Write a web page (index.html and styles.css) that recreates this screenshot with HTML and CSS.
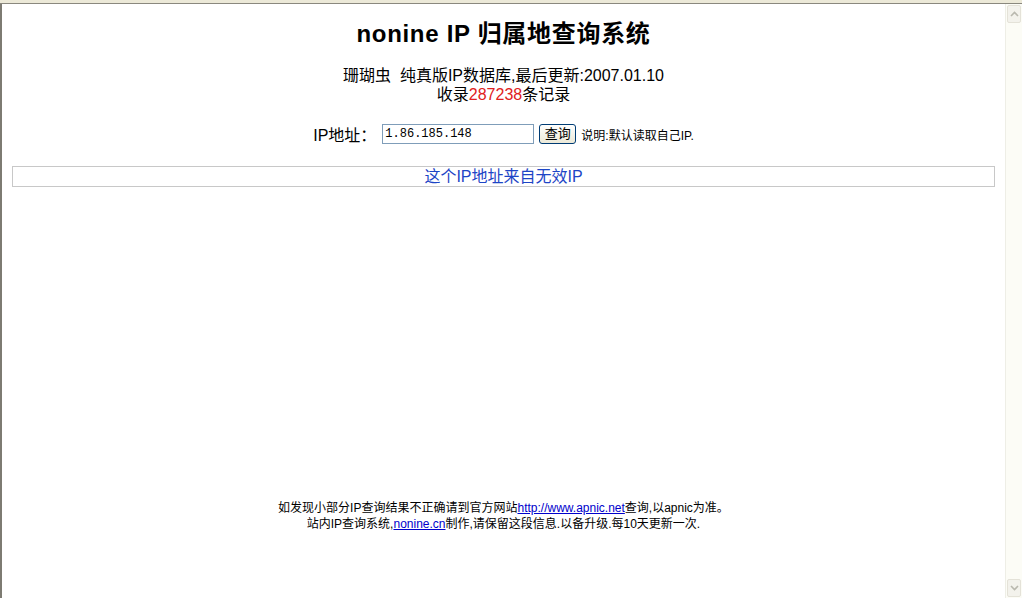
FILE: index.html
```html
<!DOCTYPE html>
<html lang="zh-CN">
<head>
    <meta charset="UTF-8">
    <title>nonine IP 归属地查询系统</title>
    <link rel="stylesheet" href="styles.css">
</head>
<body>

<div class="chrome-top"></div>

<div class="viewport">
    <div class="content">
        <h1>nonine IP 归属地查询系统</h1>

        <p class="info">
            珊瑚虫&nbsp; 纯真版IP数据库,最后更新:2007.01.10<br>
            收录<span class="count">287238</span>条记录
        </p>

        <form class="query">
            <label for="ip">IP地址：</label>
            <input type="text" id="ip" value="1.86.185.148">
            <button type="submit">查询</button>
            <span class="hint">说明:默认读取自己IP.</span>
        </form>

        <div class="result">这个IP地址来自无效IP</div>

        <div class="footer">
            <p>如发现小部分IP查询结果不正确请到官方网站<a href="#">http://www.apnic.net</a>查询,以apnic为准。</p>
            <p>站内IP查询系统,<a href="#">nonine.cn</a>制作,请保留这段信息.以备升级.每10天更新一次.</p>
        </div>
    </div>

    <div class="scrollbar">
        <div class="sb-btn">
            <svg width="9" height="6" viewBox="0 0 9 6"><path d="M1 5 L4.5 1.5 L8 5" fill="none" stroke="#b9b8ae" stroke-width="1.6"/></svg>
        </div>
        <div class="sb-track"></div>
        <div class="sb-btn">
            <svg width="9" height="6" viewBox="0 0 9 6"><path d="M1 1 L4.5 4.5 L8 1" fill="none" stroke="#b9b8ae" stroke-width="1.6"/></svg>
        </div>
    </div>
</div>

</body>
</html>
```

FILE: styles.css
```css
body {
    margin: 0;
    font-family: "Liberation Sans", "Noto Sans CJK SC", sans-serif;
    color: #000;
    background: #fff;
    overflow: hidden;
}
.chrome-top {
    height: 3px;
    background: #ece9d8;
    border-bottom: 1px solid #8a887e;
}
.viewport {
    display: flex;
    height: 594px;
}
.content {
    flex: 1;
    border-left: 2px solid #7d7b72;
    display: flex;
    flex-direction: column;
    align-items: center;
}
h1 {
    margin: 15px 0 0;
    font-size: 24px;
    line-height: 30px;
    font-weight: bold;
    letter-spacing: 0.7px;
}
.info {
    margin: 17px 0 0;
    font-size: 16px;
    line-height: 19px;
    text-align: center;
}
.count {
    color: #e02020;
}
.query {
    margin-top: 20px;
    display: flex;
    align-items: center;
    height: 20px;
}
.query label {
    font-size: 16px;
    margin-right: 6px;
}
.query input {
    box-sizing: border-box;
    width: 152px;
    height: 20px;
    padding: 0 2px;
    border: 1px solid #7f9db9;
    font-family: "Liberation Mono", monospace;
    font-size: 12px;
    margin: 0;
}
.query button {
    box-sizing: border-box;
    width: 37px;
    height: 20px;
    margin: 0 0 0 5px;
    padding: 0;
    border: 1px solid #003c74;
    border-radius: 3px;
    background: linear-gradient(#ffffff, #ece9d8);
    font-family: "Liberation Sans", "Noto Sans CJK SC", sans-serif;
    font-size: 13px;
    line-height: 16px;
    color: #000;
}
.hint {
    margin-left: 5px;
    font-size: 12px;
}
.result {
    box-sizing: border-box;
    align-self: stretch;
    margin: 22px 10px 0 10px;
    height: 21px;
    border: 1px solid #c8c8c8;
    color: #1d45c6;
    font-size: 16px;
    line-height: 19px;
    text-align: center;
}
.footer {
    margin-top: 313px;
    font-size: 12px;
    line-height: 16px;
    text-align: center;
}
.footer p {
    margin: 0;
}
.footer a {
    color: #0000cc;
}
.scrollbar {
    width: 16px;
    border-left: 1px solid #eeeee6;
    background: #fcfcf6;
    display: flex;
    flex-direction: column;
}
.sb-btn {
    height: 16px;
    margin: 1px;
    border: 1px solid #e4e2d8;
    border-radius: 2px;
    background: #f3f2ec;
    display: flex;
    align-items: center;
    justify-content: center;
}
.sb-track {
    flex: 1;
}
```
